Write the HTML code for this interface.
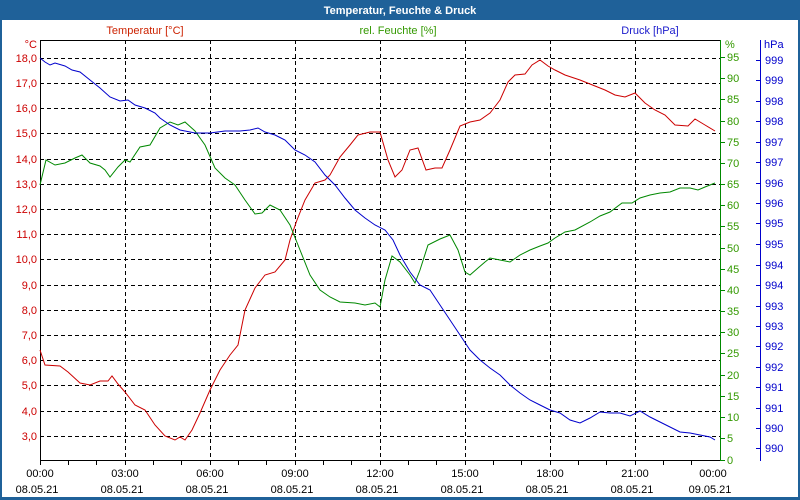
<!DOCTYPE html>
<html><head><meta charset="utf-8"><style>
html,body{margin:0;padding:0;width:800px;height:500px;overflow:hidden;background:#fff}
svg{display:block;font-family:"Liberation Sans","DejaVu Sans",sans-serif;font-size:11px}
</style></head><body>
<svg width="800" height="500" viewBox="0 0 800 500" xmlns="http://www.w3.org/2000/svg">
<rect x="0" y="0" width="800" height="500" fill="#1f6199"/>
<rect x="2" y="20" width="796" height="477" fill="#fff"/>
<text x="400" y="14" fill="#fff" font-weight="bold" text-anchor="middle">Temperatur, Feuchte &amp; Druck</text>
<text x="145" y="34" fill="#cc2200" text-anchor="middle">Temperatur [°C]</text>
<text x="398" y="34" fill="#339900" text-anchor="middle">rel. Feuchte [%]</text>
<text x="650" y="34" fill="#1a1acc" text-anchor="middle">Druck [hPa]</text>
<g stroke="#000" stroke-width="1" stroke-dasharray="4,3" fill="none">
<path d="M40 58.5H720M40 83.5H720M40 108.5H720M40 133.5H720M40 159.5H720M40 184.5H720M40 209.5H720M40 234.5H720M40 259.5H720M40 285.5H720M40 310.5H720M40 335.5H720M40 360.5H720M40 385.5H720M40 411.5H720M40 436.5H720"/>
<path d="M125.5 40V460M210.5 40V460M295.5 40V460M380.5 40V460M465.5 40V460M550.5 40V460M635.5 40V460"/>
</g>
<path d="M40.5 40V460.5H720M40 40.5H720" stroke="#000" fill="none"/>
<path d="M68.5 460v5M96.5 460v5M125.5 460v5M153.5 460v5M181.5 460v5M210.5 460v5M238.5 460v5M266.5 460v5M295.5 460v5M323.5 460v5M351.5 460v5M380.5 460v5M408.5 460v5M436.5 460v5M465.5 460v5M493.5 460v5M521.5 460v5M550.5 460v5M578.5 460v5M606.5 460v5M635.5 460v5M663.5 460v5M691.5 460v5M40.5 460v5" stroke="#000"/>
<path d="M720.5 40V461M720 57.5h5M720 78.5h5M720 99.5h5M720 121.5h5M720 142.5h5M720 163.5h5M720 184.5h5M720 205.5h5M720 226.5h5M720 248.5h5M720 269.5h5M720 290.5h5M720 311.5h5M720 332.5h5M720 353.5h5M720 375.5h5M720 396.5h5M720 417.5h5M720 438.5h5M720 460.5h5" stroke="#008800" fill="none"/>
<path d="M760.5 40V461M756 60.5h4M756 80.5h4M756 101.5h4M756 121.5h4M756 142.5h4M756 162.5h4M756 183.5h4M756 203.5h4M756 223.5h4M756 244.5h4M756 265.5h4M756 285.5h4M756 306.5h4M756 326.5h4M756 346.5h4M756 367.5h4M756 387.5h4M756 408.5h4M756 428.5h4M756 448.5h4" stroke="#0000cc" fill="none"/>
<g fill="#cc0000" text-anchor="end">
<text x="37" y="48">°C</text>
<text x="37" y="62">18,0</text><text x="37" y="87">17,0</text><text x="37" y="112">16,0</text><text x="37" y="137">15,0</text><text x="37" y="163">14,0</text><text x="37" y="188">13,0</text><text x="37" y="213">12,0</text><text x="37" y="238">11,0</text><text x="37" y="263">10,0</text><text x="37" y="289">9,0</text><text x="37" y="314">8,0</text><text x="37" y="339">7,0</text><text x="37" y="364">6,0</text><text x="37" y="389">5,0</text><text x="37" y="415">4,0</text><text x="37" y="440">3,0</text>
</g>
<g fill="#339900">
<text x="725" y="48">%</text>
<text x="727" y="61">95</text><text x="727" y="82">90</text><text x="727" y="103">85</text><text x="727" y="125">80</text><text x="727" y="146">75</text><text x="727" y="167">70</text><text x="727" y="188">65</text><text x="727" y="209">60</text><text x="727" y="230">55</text><text x="727" y="252">50</text><text x="727" y="273">45</text><text x="727" y="294">40</text><text x="727" y="315">35</text><text x="727" y="336">30</text><text x="727" y="357">25</text><text x="727" y="379">20</text><text x="727" y="400">15</text><text x="727" y="421">10</text><text x="727" y="442">5</text><text x="727" y="464">0</text>
</g>
<g fill="#0000cc">
<text x="764" y="48">hPa</text>
<text x="765" y="64">999</text><text x="765" y="84">999</text><text x="765" y="105">998</text><text x="765" y="125">998</text><text x="765" y="146">997</text><text x="765" y="166">997</text><text x="765" y="187">996</text><text x="765" y="207">996</text><text x="765" y="227">995</text><text x="765" y="248">995</text><text x="765" y="269">994</text><text x="765" y="289">994</text><text x="765" y="310">993</text><text x="765" y="330">993</text><text x="765" y="350">992</text><text x="765" y="371">992</text><text x="765" y="391">991</text><text x="765" y="412">991</text><text x="765" y="432">990</text><text x="765" y="452">990</text>
</g>
<g fill="#000" text-anchor="middle">
<text x="40" y="477">00:00</text><text x="125" y="477">03:00</text><text x="210" y="477">06:00</text><text x="295" y="477">09:00</text><text x="380" y="477">12:00</text><text x="465" y="477">15:00</text><text x="550" y="477">18:00</text><text x="635" y="477">21:00</text><text x="713" y="477">00:00</text>
<text x="37" y="493">08.05.21</text><text x="122" y="493">08.05.21</text><text x="207" y="493">08.05.21</text><text x="292" y="493">08.05.21</text><text x="377" y="493">08.05.21</text><text x="462" y="493">08.05.21</text><text x="547" y="493">08.05.21</text><text x="632" y="493">08.05.21</text><text x="710" y="493">09.05.21</text>
</g>
<polyline fill="none" stroke="#cc0000" stroke-width="1" points="40,350 45,365 60,366 68,372 80,383 90,385 100,381 108,381 112,376 118,384 125,392 135,405 145,410 155,425 165,436 175,440 180,437 185,440 192,430 200,413 210,390 220,370 230,355 238,345 245,310 255,288 265,275 275,272 285,260 290,240 297,220 305,200 315,183 325,180 330,175 340,157 350,145 358,135 370,132 380,132 388,160 395,177 402,170 410,150 418,148 426,170 435,168 442,168 450,150 460,126 470,122 480,120 490,113 500,100 508,82 515,75 525,74 532,65 540,60 548,66 555,70 565,75 580,80 590,84 605,90 615,95 625,97 635,93 645,103 655,110 665,115 675,125 688,126 695,119 705,125 715,131"/>
<polyline fill="none" stroke="#008800" stroke-width="1" points="40,185 46,160 55,165 65,163 75,158 82,155 90,163 100,166 105,170 110,177 118,167 125,160 130,162 140,147 150,145 160,128 170,122 178,125 185,122 195,131 205,145 215,168 225,178 235,185 245,200 255,214 262,213 270,205 280,210 290,225 300,250 310,275 320,290 330,297 340,302 355,303 365,305 375,303 380,307 385,280 392,256 400,262 410,275 415,283 420,270 428,245 440,239 450,235 458,250 465,272 470,275 478,268 485,262 490,258 500,260 510,262 520,255 530,250 540,246 548,243 555,238 565,232 575,230 590,222 600,216 610,212 622,203 632,203 640,198 650,195 660,193 670,192 680,188 690,188 698,190 705,187 715,183"/>
<polyline fill="none" stroke="#0000cc" stroke-width="1" points="40,58 45,62 50,65 55,63 65,66 72,70 80,72 90,80 100,88 110,97 120,101 128,100 135,105 145,108 155,113 160,118 170,125 180,130 195,133 210,133 225,131 240,131 250,130 258,128 265,132 275,135 285,140 295,150 305,155 315,162 325,175 335,185 345,198 355,210 365,218 375,225 385,230 393,240 400,255 410,272 420,285 430,290 440,305 450,320 460,335 470,350 480,360 490,368 500,375 510,385 520,393 530,400 540,405 550,410 560,413 570,420 580,423 590,418 600,412 610,413 620,413 630,416 640,411 650,417 660,422 670,427 680,432 690,433 700,435 710,437 715,440"/>
</svg>
</body></html>
